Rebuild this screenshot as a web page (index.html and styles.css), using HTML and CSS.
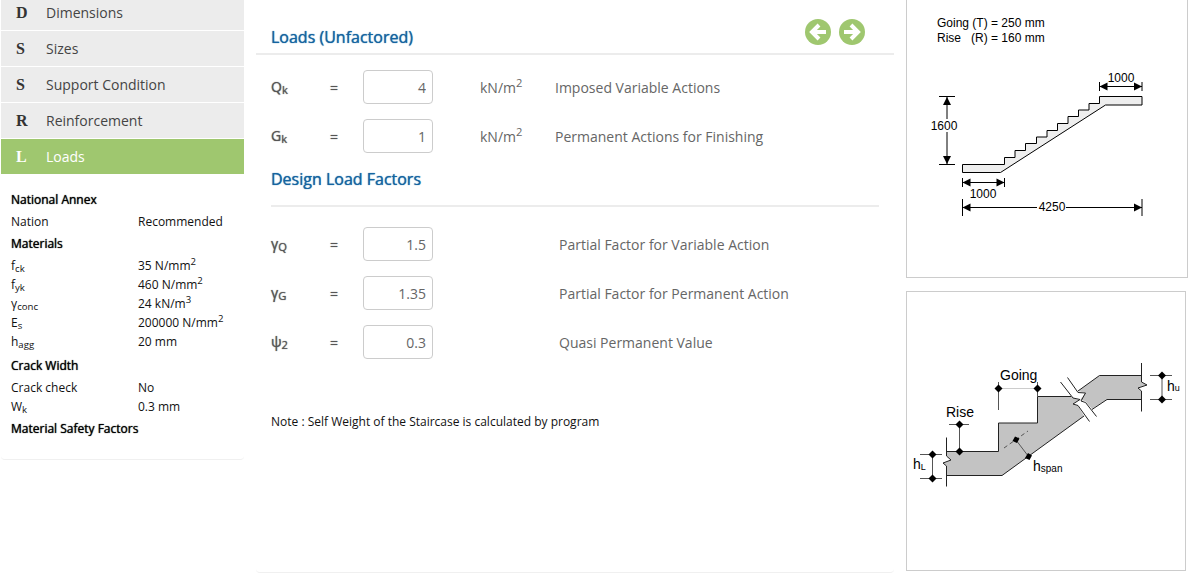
FILE: index.html
```html
<!DOCTYPE html>
<html lang="en">
<head>
  <meta charset="UTF-8" />
  <meta name="viewport" content="width=device-width, initial-scale=1.0"/>
  <title>Staircase Design - Loads</title>
  <link rel="stylesheet" href="styles.css">
</head>
<body>
  <div class="page">

    <aside class="sidebar">
      <nav class="steps">
        <a href="#dimensions"><b>D</b>Dimensions</a>
        <a href="#sizes"><b>S</b>Sizes</a>
        <a href="#support"><b>S</b>Support Condition</a>
        <a href="#reinforcement"><b>R</b>Reinforcement</a>
        <a href="#loads" class="active"><b>L</b>Loads</a>
      </nav>

      <div class="summary">
        <h3>National Annex</h3>
        <dl>
          <dt>Nation</dt><dd>Recommended</dd>
        </dl>
        <h3>Materials</h3>
        <dl class="materials">
          <dt>f<sub>ck</sub></dt><dd>35 N/mm<sup>2</sup></dd>
          <dt>f<sub>yk</sub></dt><dd>460 N/mm<sup>2</sup></dd>
          <dt>γ<sub>conc</sub></dt><dd>24 kN/m<sup>3</sup></dd>
          <dt>E<sub>s</sub></dt><dd>200000 N/mm<sup>2</sup></dd>
          <dt>h<sub>agg</sub></dt><dd>20 mm</dd>
        </dl>
        <h3>Crack Width</h3>
        <dl>
          <dt>Crack check</dt><dd>No</dd>
          <dt>W<sub>k</sub></dt><dd>0.3 mm</dd>
        </dl>
        <h3>Material Safety Factors</h3>
      </div>
    </aside>

    <main class="content">
      <header class="content-header">
        <h2>Loads (Unfactored)</h2>
        <div class="pager">
          <button type="button" aria-label="Previous">
            <svg viewBox="0 0 26 26"><circle cx="13" cy="13" r="13"/><path d="M21 13H7M14 6L7 13L14 20"/></svg>
          </button>
          <button type="button" aria-label="Next">
            <svg viewBox="0 0 26 26"><circle cx="13" cy="13" r="13"/><path d="M5 13H19M12 6L19 13L12 20"/></svg>
          </button>
        </div>
      </header>

      <form class="loads-form">
        <div class="form-row">
          <label for="qk">Q<sub>k</sub></label>
          <span class="equals">=</span>
          <input type="text" id="qk" value="4">
          <span class="unit">kN/m<sup>2</sup></span>
          <span>Imposed Variable Actions</span>
        </div>
        <div class="form-row">
          <label for="gk">G<sub>k</sub></label>
          <span class="equals">=</span>
          <input type="text" id="gk" value="1">
          <span class="unit">kN/m<sup>2</sup></span>
          <span>Permanent Actions for Finishing</span>
        </div>

        <h2 class="section-title">Design Load Factors</h2>

        <div class="form-row factor">
          <label for="gammaQ">γ<sub>Q</sub></label>
          <span class="equals">=</span>
          <input type="text" id="gammaQ" value="1.5">
          <span>Partial Factor for Variable Action</span>
        </div>
        <div class="form-row factor">
          <label for="gammaG">γ<sub>G</sub></label>
          <span class="equals">=</span>
          <input type="text" id="gammaG" value="1.35">
          <span>Partial Factor for Permanent Action</span>
        </div>
        <div class="form-row factor">
          <label for="psi2">ψ<sub>2</sub></label>
          <span class="equals">=</span>
          <input type="text" id="psi2" value="0.3">
          <span>Quasi Permanent Value</span>
        </div>

        <p class="note">Note : Self Weight of the Staircase is calculated by program</p>
      </form>
    </main>

    <aside class="drawings">
      <!-- Stair elevation -->
      <div class="drawing elevation">
        <svg viewBox="907 0 280 277">
          <text x="937" y="27">Going (T) = 250 mm</text>
          <text x="937" y="42">Rise</text>
          <text x="971" y="42">(R) = 160 mm</text>

          <path class="slab" d="M962.5 164.5H1004.5V157.5H1015V150.5H1025.5V143.5H1036.5V137H1047V130.5H1057.5V123.5H1068V116.5H1078.5V110H1089V103.5H1099.5V96.5H1142V105H1105.5L1000.5 172.5H962.5Z"/>

          <path class="dim" d="M1099.5 82V91M1142 82V91M1099.5 86.5H1142"/>
          <path class="arrow" d="M1099.5 86.5l8-4v8zM1142 86.5l-8-4v8z"/>
          <text x="1121" y="82" text-anchor="middle">1000</text>

          <path class="dim" d="M939 96.5H955M939 164.5H955M947 97V119M947 132V164"/>
          <path class="arrow" d="M947 97l-4 8h8zM947 164l-4-8h8z"/>
          <text x="944" y="130" text-anchor="middle">1600</text>

          <path class="dim" d="M962.5 178V187M1004.5 178V187M962.5 182.5H1004.5"/>
          <path class="arrow" d="M962.5 182.5l8-4v8zM1004.5 182.5l-8-4v8z"/>
          <text x="983" y="198" text-anchor="middle">1000</text>

          <path class="dim" d="M962.5 199V216M1142 199V216M962.5 207.5H1037M1066 207.5H1142"/>
          <path class="arrow" d="M962.5 207.5l8-4v8zM1142 207.5l-8-4v8z"/>
          <text x="1052" y="211" text-anchor="middle">4250</text>
        </svg>
      </div>

      <!-- Section notation -->
      <div class="drawing notation">
        <svg viewBox="907 292 278 278">
          <path class="concrete" d="M946.5 451.5H998.5V423H1037.5V396.5H1072L1073 398L1079 400L1073 404L1078 406L1084 416L1002 475.5H946.5V466L943 463L951 460L946.5 456Z"/>
          <path class="concrete" d="M1078 391L1099.5 375.5H1141.5V382L1147 385L1138 388L1141.5 391V399.5H1107L1092 409L1085 401L1080 400L1085.5 393Z"/>
          <path class="edge" d="M946.5 451.5H998.5V423H1037.5V396.5H1071M946.5 475.5H1002L1084 416M1078 391L1099.5 375.5H1141.5M1141.5 399.5H1107L1092 409.5"/>
          <path class="edge" d="M946.5 437.5V456L951 460L943 463L946.5 466V486.5M1141.5 363V382L1147 385L1138 388L1141.5 391V411.5"/>
          <path class="edge" d="M1060.5 382L1073 398L1080 399.5L1073 404L1078 405.5L1089.5 421.5M1067.5 377.5L1078 392.5L1085.5 393L1081 401L1085.5 402.5L1096.5 416.5"/>
          <path class="edge thin" d="M998.5 382V410M1037.5 382V396M959.5 424.5V451M949 424.5H969M920 454.5H942M920 478.5H942M932.5 454V478M1150 375.5H1172M1150 399.5H1172M1162 375V399M1016 440L1028.5 456.5"/>
          <path class="edge faint" d="M998.5 388.5H1037.5"/>
          <path class="edge thin dashed" d="M1004 448L1028 431"/>
          <path class="node" d="M998.5 384.5l4 4l-4 4l-4-4zM1037.5 384.5l4 4l-4 4l-4-4zM959.5 420.5l4 4l-4 4l-4-4zM959.5 447.5l4 4l-4 4l-4-4zM932.5 450.5l4 4l-4 4l-4-4zM932.5 474.5l4 4l-4 4l-4-4zM1162 371.5l4 4l-4 4l-4-4zM1162 395.5l4 4l-4 4l-4-4z"/>
          <path class="node" d="M1015 436.5l4.500 2l-2.500 4.500l-4.500-2zM1028 453l4 2.500l-2.500 4.500l-4.500-2z"/>
          <text x="1000" y="380">Going</text>
          <text x="946" y="417">Rise</text>
          <text x="913" y="469">h<tspan class="index" dy="1">L</tspan></text>
          <text x="1033" y="471">h<tspan class="index span" dy="1">span</tspan></text>
          <text x="1167" y="391">h<tspan class="index">u</tspan></text>
        </svg>
      </div>
    </aside>

  </div>
</body>
</html>
```
FILE: styles.css
```css
:root {
  --green: #9fc76f;
  --blue: #1464a0;
  --grey-bg: #ececec;
  --line: #ececec;
  --border: #cccccc;
  --text: #666666;
}

* {
  box-sizing: border-box;
}

body {
  margin: 0;
  font-family: 'Open Sans', sans-serif;
  font-size: 14px;
  line-height: 20px;
  color: var(--text);
  background-color: #fff;
  overflow: hidden;
}

sub,
sup {
  font-size: 80%;
  line-height: 0;
}

sub {
  vertical-align: -2px;
}

/* slightly heavier text without changing its width */
h2,
h3,
.form-row label,
.equals {
  font-weight: 400;
  text-shadow: 0 0 1px currentColor;
}

.page {
  display: grid;
  grid-template-columns: 243px 1fr 282px;
  column-gap: 12px;
  align-items: start;
  padding: 0 3px 0 1px;
}

/* Left column */
.sidebar {
  border-bottom: 1px solid #f0f0f0;
  border-radius: 4px;
  padding-bottom: 19px;
}

/* the list is scrolled a little under the window top */
.steps {
  display: flex;
  flex-direction: column;
  gap: 1px;
  margin-top: -5px;
}

.steps a {
  display: flex;
  align-items: center;
  height: 35px;
  padding-left: 15px;
  color: #444;
  background-color: var(--grey-bg);
  text-decoration: none;
}

.steps b {
  width: 30px;
  font-family: 'Liberation Serif', serif;
  font-size: 16px;
  color: #333;
}

.steps .active,
.steps .active b {
  color: #fff;
}

.steps .active {
  background-color: var(--green);
}

.summary {
  padding: 15px 10px 0;
  font-size: 12px;
  line-height: 19px;
  color: #111;
}

.summary h3 {
  margin: 0;
  font-size: 12px;
  line-height: 22px;
  color: #000;
}

.summary dl {
  display: grid;
  grid-template-columns: 127px 1fr;
  margin: 0;
  padding: 1px 0 2px;
}

.summary .materials {
  padding-bottom: 4px;
}

.summary dd {
  margin: 0;
}

/* Middle column */
.content {
  min-height: 573px;
  border-bottom: 1px solid #f0f0f0;
  border-radius: 4px;
}

.content-header {
  display: flex;
  justify-content: space-between;
  align-items: flex-end;
  height: 55px;
  padding: 0 29px 6px 15px;
  border-bottom: 2px solid var(--line);
}

h2 {
  margin: 0;
  font-size: 16px;
  line-height: 20px;
  color: var(--blue);
}

.pager {
  display: flex;
  gap: 8px;
  padding-bottom: 2px;
}

.pager button {
  width: 26px;
  height: 26px;
  padding: 0;
  border: 0;
  background: none;
  cursor: pointer;
}

.pager svg {
  display: block;
  fill: var(--green);
}

.pager path {
  fill: none;
  stroke: #fff;
  stroke-width: 4;
}

.loads-form {
  padding: 15px 15px 0;
}

.form-row {
  display: grid;
  grid-template-columns: 59px 33px 70px 47px 75px 1fr;
  align-items: center;
  margin-bottom: 15px;
}

.form-row input {
  width: 70px;
  height: 34px;
  padding: 6px;
  border: 1px solid var(--border);
  border-radius: 4px;
  font: inherit;
  color: var(--text);
  text-align: right;
}

.form-row span {
  padding-top: 2px;
}

.form-row label,
.equals {
  color: #555;
}

.form-row .unit {
  grid-column: 5;
}

.form-row.factor {
  grid-template-columns: 59px 33px 70px 126px 1fr;
}

.form-row.factor span:last-child {
  grid-column: 5;
}

.section-title {
  margin-bottom: 20px;
  padding: 1px 0 16px;
  border-bottom: 2px solid var(--line);
}

.note {
  margin: 53px 0 0;
  font-size: 12px;
  color: #111;
}

/* Right column */
.drawing {
  border: 1px solid var(--border);
}

.drawing svg {
  display: block;
  width: 100%;
  font-family: 'Liberation Sans', Arial, sans-serif;
  font-size: 12px;
  fill: #000;
}

.elevation {
  border-top: 0;
}

.notation {
  margin: 13px 2px 0 0;
}

.notation svg {
  font-size: 14px;
}

.index {
  font-size: 9px;
}

.index.span {
  font-size: 10px;
}

.slab {
  fill: #eee;
  stroke: #000;
}

.dim {
  fill: none;
  stroke: #000;
}

.concrete {
  fill: #c3c3c3;
}

.edge {
  fill: none;
  stroke: #222;
}

.thin {
  stroke: #555;
}

.faint {
  stroke: #ccc;
}

.dashed {
  stroke-dasharray: 4 3;
}
```
